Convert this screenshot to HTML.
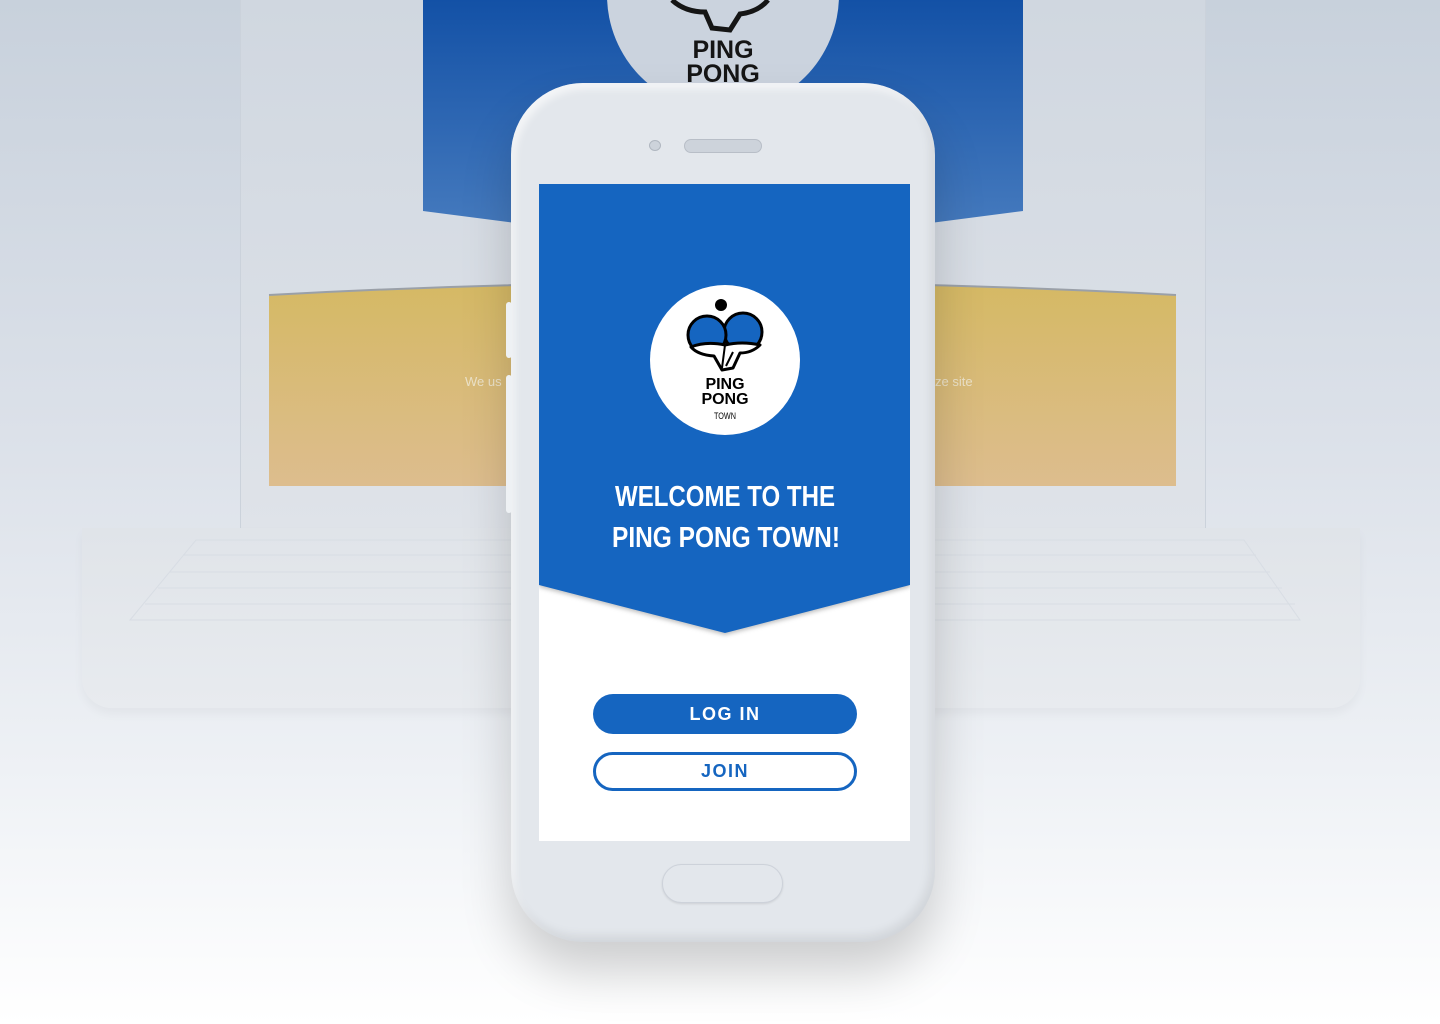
<!DOCTYPE html>
<html><head><meta charset="utf-8"><style>
*{margin:0;padding:0;box-sizing:border-box}
body{width:1440px;height:1024px;overflow:hidden;position:relative;font-family:"Liberation Sans",sans-serif;background:linear-gradient(180deg,#c8d1dc 0%,#dde2ea 45%,#eef1f5 75%,#fff 100%)}
.abs{position:absolute}
</style></head><body>
<div class="abs" style="left:240px;top:0;width:966px;height:528px;background:linear-gradient(180deg,#d0d7e0,#dfe3e9);border-left:1px solid #cbd2db;border-right:1px solid #cbd2db"></div>
<div class="abs" style="left:82px;top:528px;width:1278px;height:180px;background:linear-gradient(180deg,#e0e4e9,#e8ebef);border-radius:0 0 30px 30px;box-shadow:0 6px 10px rgba(0,0,0,0.04)"></div>
<svg class="abs" style="left:0;top:0" width="1440" height="1024">
  <g stroke="#d8dde4" stroke-width="1" fill="none">
    <path d="M196 540 L1244 540 L1300 620 L130 620 Z"/>
    <path d="M183 555 H1256 M170 572 H1270 M158 588 H1282 M145 604 H1295"/>
  </g>
  <defs>
    <linearGradient id="bb" x1="0" y1="0" x2="0" y2="1"><stop offset="0" stop-color="#1351a6"/><stop offset="1" stop-color="#4a7ec0"/></linearGradient>
    <linearGradient id="yy" x1="0" y1="0" x2="0" y2="1"><stop offset="0" stop-color="#d5b964"/><stop offset="1" stop-color="#ddbd8e"/></linearGradient>
  </defs>
  <path d="M423 0 H1023 V211 L723 250 L423 211 Z" fill="url(#bb)"/>
  <path d="M269 295 Q723 270 1176 295 V486 H269 Z" fill="url(#yy)"/>
  <path d="M269 295 Q723 270 1176 295" stroke="#9aa0a8" stroke-width="2" fill="none"/>
  <circle cx="723" cy="-5" r="116" fill="#cbd3de"/>
  <text x="723" y="58" font-family="Liberation Sans" font-weight="bold" font-size="25" text-anchor="middle" fill="#151515">PING</text>
  <text x="723" y="82" font-family="Liberation Sans" font-weight="bold" font-size="25" text-anchor="middle" fill="#151515">PONG</text>
  <path d="M672 0 Q685 12 705 12 L712 28 L730 30 L740 14 Q758 12 768 0" stroke="#151515" stroke-width="5" fill="none"/>
  <text x="465" y="386" font-size="13" fill="#ece2c8">We us</text>
  <text x="935" y="386" font-size="13" fill="#ece2c8">ze site</text>
</svg>
<div class="abs" style="left:511px;top:83px;width:424px;height:859px;background:#e3e7ec;border-radius:72px;box-shadow:0 30px 50px rgba(0,0,0,0.18), inset -4px -6px 10px rgba(0,0,0,0.08), inset 4px 6px 8px rgba(255,255,255,0.6)"></div>
<div class="abs" style="left:506px;top:302px;width:6px;height:56px;background:#eef1f4;border-radius:3px"></div>
<div class="abs" style="left:506px;top:375px;width:6px;height:138px;background:#eef1f4;border-radius:3px"></div>
<div class="abs" style="left:649px;top:140px;width:12px;height:11px;border-radius:50%;background:#cdd3db;border:1px solid #b0b7c0"></div>
<div class="abs" style="left:684px;top:139px;width:78px;height:14px;border-radius:7px;background:#cdd3db;border:1px solid #b8bec7"></div>
<div class="abs" style="left:662px;top:864px;width:121px;height:39px;border-radius:20px;background:#e3e7ec;border:1px solid #cdd2da;box-shadow:0 1px 2px rgba(0,0,0,0.1)"></div>
<div class="abs" style="left:539px;top:184px;width:371px;height:657px;background:#fff;overflow:hidden">
<svg width="371" height="657" class="abs" style="left:0;top:0">
  <path d="M0 0 H371 V401 L186 449 L0 401 Z" fill="#1565c0" style="filter:drop-shadow(0 2px 2px rgba(0,0,0,0.25))"/>
</svg>
</div>
<div class="abs" style="left:650px;top:285px;width:150px;height:150px;border-radius:50%;background:#fff"></div>
<svg class="abs" style="left:0;top:0" width="1440" height="1024">
  <circle cx="721" cy="305" r="6" fill="#000"/>
  <g stroke="#000" stroke-width="3" stroke-linejoin="round">
    <circle cx="743" cy="332" r="19" fill="#1565c0"/>
    <circle cx="707" cy="335" r="19" fill="#1565c0"/>
    <path d="M691 347 Q706 341 725 345 Q742 341 760 345 Q752 353 740 353 L733 368 L722 370 L714 356 Q698 355 691 347 Z" fill="#fff"/>
    <path d="M725 345 L722 368 M733 352 L726 366" fill="none" stroke-width="2"/>
  </g>
  <text x="725" y="389" font-family="Liberation Sans" font-weight="bold" font-size="16" text-anchor="middle">PING</text>
  <text x="725" y="404" font-family="Liberation Sans" font-weight="bold" font-size="16" text-anchor="middle">PONG</text>
  <text x="725" y="419" font-family="Liberation Sans" font-size="9" text-anchor="middle" textLength="22" lengthAdjust="spacingAndGlyphs">TOWN</text>
  <text x="615" y="506" font-family="Liberation Sans" font-weight="bold" font-size="29" fill="#fff" textLength="220" lengthAdjust="spacingAndGlyphs">WELCOME TO THE</text>
  <text x="612" y="547" font-family="Liberation Sans" font-weight="bold" font-size="29" fill="#fff" textLength="228" lengthAdjust="spacingAndGlyphs">PING PONG TOWN!</text>
</svg>
<div class="abs" style="left:593px;top:694px;width:264px;height:40px;border-radius:20px;background:#1565c0;color:#fff;font-weight:bold;font-size:18px;letter-spacing:1.5px;text-align:center;line-height:40px">LOG IN</div>
<div class="abs" style="left:593px;top:752px;width:264px;height:39px;border-radius:20px;border:3px solid #1565c0;background:#fff;color:#1565c0;font-weight:bold;font-size:18px;letter-spacing:1.5px;text-align:center;line-height:33px">JOIN</div>
</body></html>
